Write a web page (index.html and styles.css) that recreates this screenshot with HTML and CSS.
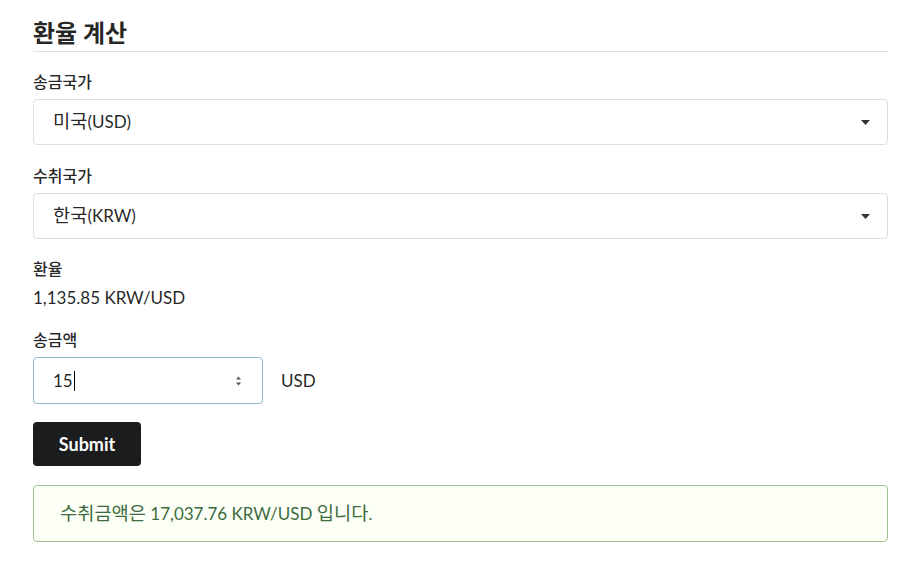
FILE: index.html
```html
<!DOCTYPE html>
<html lang="ko">
<head>
<meta charset="utf-8">
<link rel="stylesheet" href="styles.css">
</head>
<body>
<div class="page">
  <h2 class="title">환율 계산</h2>
  <form class="form">
    <div class="field field-first">
      <label class="label">송금국가</label>
      <div class="select">
        <span><span class="ko">미국</span>(USD)</span>
        <svg class="caret" width="9" height="5" viewBox="0 0 9 5"><path d="M0 0h9L4.5 5z" fill="#333"/></svg>
      </div>
    </div>
    <div class="field">
      <label class="label">수취국가</label>
      <div class="select">
        <span><span class="ko">한국</span>(KRW)</span>
        <svg class="caret" width="9" height="5" viewBox="0 0 9 5"><path d="M0 0h9L4.5 5z" fill="#333"/></svg>
      </div>
    </div>
    <div class="field field-rate">
      <label class="label">환율</label>
      <div class="value">1,135.85 KRW/USD</div>
    </div>
    <div class="field">
      <label class="label">송금액</label>
      <div class="amount-row">
        <div class="number">
          <span class="num-text">15<span class="cursor"></span></span>
          <svg class="spin" width="7" height="12" viewBox="0 0 7 12"><path d="M3.5 1.5L6 4.5H1z M3.5 10.5L6 7.5H1z" fill="#555"/></svg>
        </div>
        <span class="unit">USD</span>
      </div>
    </div>
    <button type="button" class="btn">Submit</button>
    <div class="alert"><span><span class="ko">수취금액은</span> 17,037.76 KRW/USD <span class="ko">입니다</span>.</span></div>
  </form>
</div>
</body>
</html>
```
FILE: styles.css
```css
html, body { margin: 0; padding: 0; background: #fff; }
body {
  font-family: Lato, "Noto Sans CJK KR", sans-serif;
  color: rgba(0,0,0,0.87);
  font-size: 17px;
}
.ko { font-family: "Noto Sans CJK KR", sans-serif; font-size: 1.1em; line-height: 1; }
.page { padding: 17px 19px 0 33px; }
.title {
  margin: 0;
  font-size: 24px;
  font-weight: 700;
  line-height: 32px;
  padding-bottom: 2px;
  border-bottom: 1px solid #dededf;
  color: rgba(0,0,0,0.87);
}
.form { display: flex; flex-direction: column; }
.field { display: flex; flex-direction: column; margin-top: 20px; }
.field-first { margin-top: 19px; }
.field-rate { margin-top: 19px; }
.label {
  font-size: 16px;
  font-weight: 500;
  line-height: 22px;
  margin-bottom: 6px;
  color: rgba(0,0,0,0.87);
}
.select {
  height: 46px;
  box-sizing: border-box;
  border: 1px solid #dedede;
  border-radius: 4px;
  display: flex;
  align-items: center;
  justify-content: space-between;
  padding: 0 17px 0 19px;
  font-size: 17px;
  line-height: 22px;
}
.value { font-size: 17px; line-height: 22px; margin-top: 1px; }
.amount-row { display: flex; align-items: center; gap: 18px; }
.number {
  width: 230px;
  height: 47px;
  box-sizing: border-box;
  border: 1px solid #8fb8c8;
  border-radius: 4px;
  display: flex;
  align-items: center;
  justify-content: space-between;
  padding: 0 20px 0 19px;
}
.num-text { display: inline-flex; align-items: center; }
.cursor { display: inline-block; width: 1px; height: 20px; background: #000; margin-left: 1px; }
.unit { font-size: 17px; }
.btn {
  align-self: flex-start;
  margin-top: 18px;
  width: 108px;
  height: 44px;
  border: 0;
  border-radius: 4px;
  background: #1b1c1d;
  color: #fff;
  font-family: Lato, sans-serif;
  font-weight: 700;
  font-size: 18px;
  padding: 0;
}
.alert {
  margin-top: 19px;
  height: 57px;
  box-sizing: border-box;
  border: 1px solid #a3c293;
  border-radius: 4px;
  background: #fcfff5;
  color: #3d6b3e;
  display: flex;
  align-items: center;
  padding: 0 26px;
  font-size: 17px;
  line-height: 22px;
}
```
